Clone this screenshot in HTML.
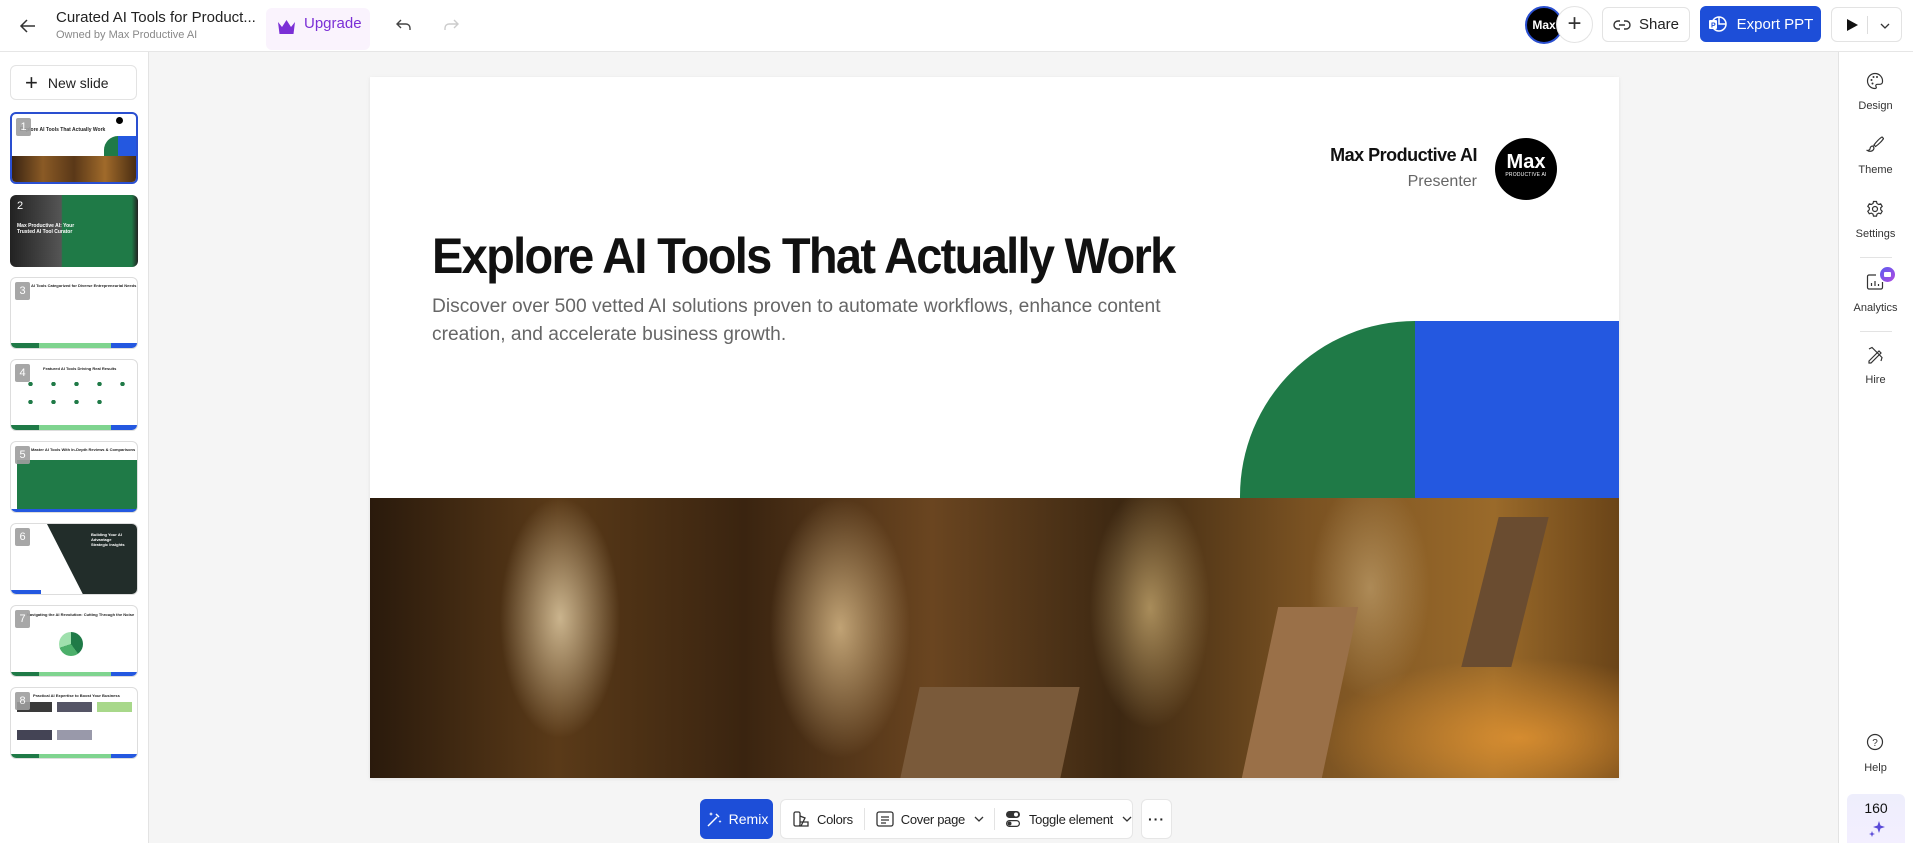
<!DOCTYPE html>
<html><head><meta charset="utf-8"><style>
*{box-sizing:border-box;margin:0;padding:0}
body{width:1913px;height:843px;overflow:hidden;background:#f5f5f5;font-family:"Liberation Sans",sans-serif;color:#222;position:relative}
.abs{position:absolute}
.top{left:0;top:0;width:1913px;height:52px;background:#fff;border-bottom:1px solid #e6e6e6}
.btn{position:absolute;border:1px solid #e3e3e3;border-radius:6px;background:#fff;display:flex;align-items:center;justify-content:center;font-size:15px;color:#222}
.left{left:0;top:52px;width:149px;height:791px;background:#fff;border-right:1px solid #e3e3e3}
.right{left:1838px;top:52px;width:75px;height:791px;background:#fff;border-left:1px solid #e3e3e3}
.th{position:absolute;left:10px;width:128px;height:72px;border:1px solid #ddd;border-radius:6px;overflow:hidden;background:#fff}
.num{position:absolute;left:4px;top:4px;width:15px;height:18px;background:#9e9e9e;opacity:.9;color:#fff;font-size:11px;text-align:center;line-height:18px;border-radius:2px}
.lbl{position:absolute;width:75px;text-align:center;font-size:11px;color:#333;left:0}
.tb{position:absolute;top:799px;height:40px;display:flex;align-items:center;font-size:14px;color:#222;white-space:nowrap}
.tb>*{flex-shrink:0}
.grp{font-size:13px;letter-spacing:-.3px}
</style></head><body>
<div class="abs top"></div>
<svg class="abs" style="left:18px;top:16px" width="20" height="20" viewBox="0 0 20 20"><path d="M17 10H3M9 4L3 10l6 6" stroke="#333" stroke-width="1.5" fill="none"/></svg>
<div class="abs" style="left:56px;top:9px;font-size:15px;color:#222">Curated AI Tools for Product...</div>
<div class="abs" style="left:56px;top:29px;font-size:11px;color:#888">Owned by Max Productive AI</div>
<div class="abs" style="left:266px;top:8px;width:104px;height:42px;background:#faf3fd;border-radius:6px"></div>
<svg class="abs" style="left:277px;top:19px" width="19" height="16" viewBox="0 0 19 16"><path d="M1 3l4 5 4.5-7L14 8l4-5-1.5 12h-14z" fill="#7b2fd6"/></svg>
<div class="abs" style="left:304px;top:15px;font-size:15px;color:#7b2fd6">Upgrade</div>
<svg class="abs" style="left:395px;top:16px" width="18" height="18" viewBox="0 0 18 18"><path d="M6 4L2 8l4 4M2 8h9a4 4 0 0 1 4 4v2" stroke="#444" stroke-width="1.4" fill="none"/></svg>
<svg class="abs" style="left:442px;top:16px" width="18" height="18" viewBox="0 0 18 18"><path d="M12 4l4 4-4 4M16 8H7a4 4 0 0 0-4 4v2" stroke="#ccc" stroke-width="1.4" fill="none"/></svg>
<div class="abs" style="left:1525px;top:6px;width:38px;height:38px;border-radius:50%;background:#000;border:2px solid #2a4fd0;color:#fff;font-size:12px;font-weight:bold;line-height:34px;text-align:center">Max</div>
<div class="abs" style="left:1556px;top:6px;width:37px;height:37px;border-radius:50%;background:#fff;border:1px solid #e3e3e3;text-align:center;line-height:34px;font-size:24px;color:#333;font-weight:300">+</div>
<div class="btn" style="left:1602px;top:7px;width:88px;height:35px"><svg width="18" height="12" viewBox="0 0 18 12" style="margin-right:8px"><path d="M7 2H5a4 4 0 0 0 0 8h2M11 2h2a4 4 0 0 1 0 8h-2M6 6h6" stroke="#333" stroke-width="1.4" fill="none"/></svg>Share</div>
<div class="btn" style="left:1700px;top:6px;width:121px;height:36px;background:#1d4ed8;border-color:#1d4ed8;color:#fff"><svg width="20" height="18" viewBox="0 0 20 18" style="margin-right:9px"><circle cx="11" cy="9" r="7" fill="none" stroke="#fff" stroke-width="1.5"/><path d="M11 2v7h7" stroke="#fff" stroke-width="1.5" fill="none"/><rect x="1" y="5" width="8" height="9" rx="1" fill="#fff"/><text x="3" y="12.5" font-size="7" font-weight="bold" fill="#1d4ed8" font-family="Liberation Sans">P</text></svg>Export PPT</div>
<div class="btn" style="left:1831px;top:7px;width:71px;height:35px;justify-content:flex-start"><svg width="14" height="14" style="position:absolute;left:13px;top:10px"><path d="M2 1l11 6-11 6z" fill="#111"/></svg><div style="position:absolute;left:35px;top:8px;width:1px;height:18px;background:#ddd"></div><svg width="12" height="8" style="position:absolute;left:47px;top:14px"><path d="M2 2l4 4 4-4" stroke="#333" stroke-width="1.3" fill="none"/></svg></div>

<div class="abs left"></div>
<div class="btn" style="left:10px;top:65px;width:127px;height:35px;font-size:14px;justify-content:flex-start;padding-left:14px"><span style="font-size:22px;font-weight:300;margin-right:10px;line-height:1">+</span>New slide</div>

<div class="th" style="top:112px;border:2px solid #2a4fd0">
 <div class="abs" style="left:0;top:42px;width:124px;height:28px;background:linear-gradient(90deg,#3a2412,#8a5a25,#5a3818,#a06a2a,#4a2d12)"></div>
 <div class="abs" style="left:92px;top:22px;width:14px;height:20px;background:#1f7a47;border-radius:14px 0 0 0"></div>
 <div class="abs" style="left:106px;top:22px;width:18px;height:20px;background:#2458e0"></div>
 <div class="abs" style="left:8px;top:13px;font-size:5px;font-weight:bold">Explore AI Tools That Actually Work</div>
 <div class="abs" style="left:104px;top:3px;width:7px;height:7px;border-radius:50%;background:#000"></div>
 <div class="num" style="left:4px;top:4px">1</div>
</div>
<div class="th" style="top:195px;border:none">
 <div class="abs" style="left:0;top:0;width:128px;height:72px;background:linear-gradient(90deg,#222,#555 40%,#1f7a47 41%,#1f7a47 95%,#222)"></div>
 <div class="abs" style="left:7px;top:28px;font-size:5px;color:#fff;font-weight:bold">Max Productive AI: Your<br>Trusted AI Tool Curator</div>
 <div class="abs" style="left:7px;top:5px;color:#fff;font-size:11px">2</div>
</div>
<div class="th" style="top:277px">
 <div class="abs" style="left:0;bottom:0;width:128px;height:5px;background:linear-gradient(90deg,#1f7a47 22%,#7fd48f 22%,#7fd48f 78%,#2458e0 78%)"></div>
 <div class="abs" style="left:20px;top:5px;font-size:4px;font-weight:bold">AI Tools Categorized for Diverse Entrepreneurial Needs</div>
 <div class="num">3</div>
</div>
<div class="th" style="top:359px">
 <div class="abs" style="left:0;bottom:0;width:128px;height:5px;background:linear-gradient(90deg,#1f7a47 22%,#7fd48f 22%,#7fd48f 78%,#2458e0 78%)"></div>
 <div class="abs" style="left:32px;top:6px;font-size:4px;font-weight:bold">Featured AI Tools Driving Real Results</div>
 <div class="abs" style="left:8px;top:22px;width:110px;height:4px;background:radial-gradient(circle,#1f7a47 2px,transparent 2.5px) 0 0/23px 4px"></div>
 <div class="abs" style="left:8px;top:40px;width:90px;height:4px;background:radial-gradient(circle,#1f7a47 2px,transparent 2.5px) 0 0/23px 4px"></div>
 <div class="num">4</div>
</div>
<div class="th" style="top:441px">
 <div class="abs" style="left:6px;top:18px;width:120px;height:52px;background:#1f7a47"></div>
 <div class="abs" style="left:0;bottom:0;width:128px;height:3px;background:#2458e0"></div>
 <div class="abs" style="left:20px;top:5px;font-size:4px;font-weight:bold">Master AI Tools With In-Depth Reviews &amp; Comparisons</div>
 <div class="num">5</div>
</div>
<div class="th" style="top:523px">
 <div class="abs" style="left:36px;top:0;width:92px;height:72px;background:#222d2a;clip-path:polygon(0 0,100% 0,100% 100%,40% 100%)"></div>
 <div class="abs" style="left:0;bottom:0;width:30px;height:4px;background:#2458e0"></div>
 <div class="abs" style="left:80px;top:8px;font-size:4px;color:#fff;font-weight:bold">Building Your AI Advantage<br>Strategic Insights</div>
 <div class="num">6</div>
</div>
<div class="th" style="top:605px">
 <div class="abs" style="left:0;bottom:0;width:128px;height:4px;background:linear-gradient(90deg,#1f7a47 22%,#7fd48f 22%,#7fd48f 78%,#2458e0 78%)"></div>
 <div class="abs" style="left:16px;top:6px;font-size:4px;font-weight:bold">Navigating the AI Revolution: Cutting Through the Noise</div>
 <div class="abs" style="left:48px;top:26px;width:24px;height:24px;border-radius:50%;background:conic-gradient(#1f7a47 0 40%,#4caf6a 40% 70%,#9fe0ad 70%)"></div>
 <div class="num">7</div>
</div>
<div class="th" style="top:687px">
 <div class="abs" style="left:0;bottom:0;width:128px;height:4px;background:linear-gradient(90deg,#1f7a47 22%,#7fd48f 22%,#7fd48f 78%,#2458e0 78%)"></div>
 <div class="abs" style="left:22px;top:5px;font-size:4px;font-weight:bold">Practical AI Expertise to Boost Your Business</div>
 <div class="abs" style="left:6px;top:14px;width:35px;height:10px;background:#3a3a3a"></div>
 <div class="abs" style="left:46px;top:14px;width:35px;height:10px;background:#556"></div>
 <div class="abs" style="left:86px;top:14px;width:35px;height:10px;background:#a8d88a"></div>
 <div class="abs" style="left:6px;top:42px;width:35px;height:10px;background:#445"></div>
 <div class="abs" style="left:46px;top:42px;width:35px;height:10px;background:#99a"></div>
 <div class="num">8</div>
</div>

<div class="abs" style="left:370px;top:77px;width:1249px;height:701px;background:#fff;box-shadow:0 1px 4px rgba(0,0,0,.08);overflow:hidden">
 <div class="abs" style="left:870px;top:244px;width:175px;height:177px;background:#1f7a47;border-radius:177px 0 0 0"></div>
 <div class="abs" style="left:1045px;top:244px;width:204px;height:177px;background:#2458e0"></div>
 <div class="abs" style="left:0;top:421px;width:1249px;height:280px;background:
  radial-gradient(ellipse 60px 120px at 190px 120px,rgba(230,210,170,.8),transparent),
  radial-gradient(ellipse 70px 130px at 470px 130px,rgba(220,190,140,.8),transparent),
  radial-gradient(ellipse 60px 120px at 780px 110px,rgba(210,180,120,.7),transparent),
  radial-gradient(ellipse 60px 110px at 1000px 90px,rgba(200,170,120,.6),transparent),
  radial-gradient(ellipse 200px 80px at 1150px 240px,rgba(230,150,50,.8),transparent),
  linear-gradient(90deg,#2a1a0c,#5a3a18 15%,#3a2410 30%,#6a4520 45%,#3d2812 60%,#7a5222 75%,#9a6a2a 90%,#6a4418)"></div>
 <div class="abs" style="left:540px;top:610px;width:160px;height:91px;background:#7a5a3a;transform:skewX(-12deg)"></div>
 <div class="abs" style="left:890px;top:530px;width:80px;height:171px;background:#9a7048;transform:skewX(-12deg)"></div>
 <div class="abs" style="left:1110px;top:440px;width:50px;height:150px;background:#6a4c30;transform:skewX(-14deg)"></div>
 <div class="abs" style="right:142px;top:68px;font-size:18px;font-weight:bold;color:#111;letter-spacing:-.5px">Max Productive AI</div>
 <div class="abs" style="right:142px;top:96px;font-size:16px;color:#666">Presenter</div>
 <div class="abs" style="left:1125px;top:61px;width:62px;height:62px;border-radius:50%;background:#000;color:#fff;text-align:center">
  <div style="font-size:20px;font-weight:bold;margin-top:14px;line-height:20px">Max</div><div style="font-size:5px;letter-spacing:.2px">PRODUCTIVE AI</div></div>
 <div class="abs" style="left:62px;top:150px;font-size:50px;font-weight:bold;color:#111;letter-spacing:-1.8px;white-space:nowrap;transform:scaleX(.94);transform-origin:0 0">Explore AI Tools That Actually Work</div>
 <div class="abs" style="left:62px;top:216px;font-size:19px;color:#666;line-height:28px;white-space:nowrap;transform:scaleX(1.01);transform-origin:0 0">Discover over 500 vetted AI solutions proven to automate workflows, enhance content<br>creation, and accelerate business growth.</div>
</div>

<div class="tb" style="left:700px;width:73px;background:#1d4ed8;color:#fff;border-radius:6px;justify-content:center"><svg width="18" height="18" viewBox="0 0 18 18" style="margin-right:6px"><path d="M3 16L12 7M11 4l3 3" stroke="#fff" stroke-width="1.5" fill="none"/><path d="M6 2l.6 1.4L8 4l-1.4.6L6 6l-.6-1.4L4 4l1.4-.6zM15 10l.5 1 1 .5-1 .5-.5 1-.5-1-1-.5 1-.5z" fill="#fff"/></svg>Remix</div>
<div class="tb grp" style="left:780px;width:353px;background:#fff;border:1px solid #e6e6e6;border-radius:6px;overflow:hidden">
 <svg width="18" height="18" viewBox="0 0 18 18" style="margin-left:11px"><rect x="2" y="2" width="6" height="14" rx="1.5" fill="none" stroke="#333" stroke-width="1.3"/><path d="M8 6l5 2-4 8M8 12h8v4H7" fill="none" stroke="#333" stroke-width="1.3"/></svg>
 <span style="margin-left:7px">Colors</span>
 <div style="width:1px;height:22px;background:#e3e3e3;margin-left:11px"></div>
 <svg width="18" height="16" viewBox="0 0 18 16" style="margin-left:11px"><rect x="1" y="1" width="16" height="14" rx="2" fill="none" stroke="#333" stroke-width="1.3"/><path d="M5 6h8M5 9h8M5 12h5" stroke="#333" stroke-width="1.2"/></svg>
 <span style="margin-left:7px">Cover page</span>
 <svg width="10" height="8" style="margin-left:9px"><path d="M1 2l4 4 4-4" stroke="#333" stroke-width="1.3" fill="none"/></svg>
 <div style="width:1px;height:22px;background:#e3e3e3;margin-left:10px"></div>
 <svg width="16" height="18" viewBox="0 0 16 18" style="margin-left:10px"><rect x="1" y="1" width="14" height="7" rx="3.5" fill="#333"/><rect x="1.6" y="10.6" width="12.8" height="5.8" rx="2.9" fill="none" stroke="#333" stroke-width="1.2"/><circle cx="4.5" cy="13.5" r="2" fill="#333"/><circle cx="11" cy="4.5" r="2" fill="#fff"/></svg>
 <span style="margin-left:8px">Toggle element</span>
 <svg width="10" height="8" style="margin-left:9px"><path d="M1 2l4 4 4-4" stroke="#333" stroke-width="1.3" fill="none"/></svg>
</div>
<div class="tb" style="left:1141px;width:31px;background:#fff;border:1px solid #e6e6e6;border-radius:6px;justify-content:center;font-weight:bold;letter-spacing:1px;font-size:14px">···</div>

<div class="abs right"></div>
<svg class="abs" style="left:1866px;top:72px" width="18" height="18" viewBox="0 0 18 18"><path d="M9 1.5a7.5 7.5 0 1 0 0 15c1.3 0 1.6-1 1-2-.6-1 0-2.2 1.3-2.2H14a2.5 2.5 0 0 0 2.5-2.5A7.5 7.5 0 0 0 9 1.5z" fill="none" stroke="#333" stroke-width="1.2"/><circle cx="5.5" cy="8" r="1" fill="#333"/><circle cx="7.5" cy="5" r="1" fill="#333"/><circle cx="11" cy="5" r="1" fill="#333"/><circle cx="6.5" cy="11.5" r="1" fill="#333"/></svg>
<div class="lbl" style="left:1838px;top:100px">Design</div>
<svg class="abs" style="left:1866px;top:135px" width="18" height="18" viewBox="0 0 18 18"><path d="M16 2c-2 1-6 5-8 8l1.5 1.5c3-2 7-6 8-8zM7 11c-2 0-3 1.5-3 3-.5 1-1.5 1.5-2.5 1.5 2 1.5 6 1 6.5-2.5z" fill="none" stroke="#333" stroke-width="1.2"/></svg>
<div class="lbl" style="left:1838px;top:164px">Theme</div>
<svg class="abs" style="left:1866px;top:200px" width="18" height="18" viewBox="0 0 18 18"><circle cx="9" cy="9" r="2.5" fill="none" stroke="#333" stroke-width="1.2"/><path d="M7.5 1.5h3l.5 2 1.7 1 2-.7 1.5 2.6-1.5 1.4v2l1.5 1.4-1.5 2.6-2-.7-1.7 1-.5 2h-3l-.5-2-1.7-1-2 .7-1.5-2.6 1.5-1.4v-2L1.8 6.4l1.5-2.6 2 .7 1.7-1z" fill="none" stroke="#333" stroke-width="1.2"/></svg>
<div class="lbl" style="left:1838px;top:228px">Settings</div>
<div class="abs" style="left:1860px;top:257px;width:32px;height:1px;background:#e3e3e3"></div>
<svg class="abs" style="left:1866px;top:273px" width="18" height="18" viewBox="0 0 18 18"><path d="M10 2H3a1.5 1.5 0 0 0-1.5 1.5v11A1.5 1.5 0 0 0 3 16h12a1.5 1.5 0 0 0 1.5-1.5V9" fill="none" stroke="#333" stroke-width="1.2"/><path d="M5.5 13v-3M9 13V8M12.5 13v-2" stroke="#333" stroke-width="1.2"/></svg>
<div class="abs" style="left:1880px;top:267px;width:15px;height:15px;border-radius:50%;background:linear-gradient(135deg,#5b5cf0,#b04ae0)"><div style="margin:5px 4px;width:7px;height:5px;background:#fff;border-radius:1px"></div></div>
<div class="lbl" style="left:1838px;top:302px">Analytics</div>
<div class="abs" style="left:1860px;top:331px;width:32px;height:1px;background:#e3e3e3"></div>
<svg class="abs" style="left:1866px;top:346px" width="18" height="18" viewBox="0 0 18 18"><path d="M3 15l10-10 2 2-10 10H3zM3 3l3-1.5 10 10L15 15" fill="none" stroke="#333" stroke-width="1.2"/></svg>
<div class="lbl" style="left:1838px;top:374px">Hire</div>
<svg class="abs" style="left:1866px;top:733px" width="18" height="18" viewBox="0 0 18 18"><circle cx="9" cy="9" r="7.5" fill="none" stroke="#333" stroke-width="1.2"/><text x="9" y="13" font-size="10" text-anchor="middle" fill="#333" font-family="Liberation Sans">?</text></svg>
<div class="lbl" style="left:1838px;top:762px">Help</div>
<div class="abs" style="left:1847px;top:794px;width:58px;height:49px;border-radius:6px 6px 0 0;background:linear-gradient(180deg,#eeeefc,#f3efff)"></div>
<div class="abs" style="left:1847px;top:800px;width:58px;text-align:center;font-size:14px;color:#111">160</div>
<svg class="abs" style="left:1868px;top:820px" width="18" height="18" viewBox="0 0 18 18"><path d="M11 1l1.5 4.5L17 7l-4.5 1.5L11 13l-1.5-4.5L5 7l4.5-1.5zM4 11l.8 2.2L7 14l-2.2.8L4 17l-.8-2.2L1 14l2.2-.8z" fill="#5a4ad8"/></svg>
</body></html>
